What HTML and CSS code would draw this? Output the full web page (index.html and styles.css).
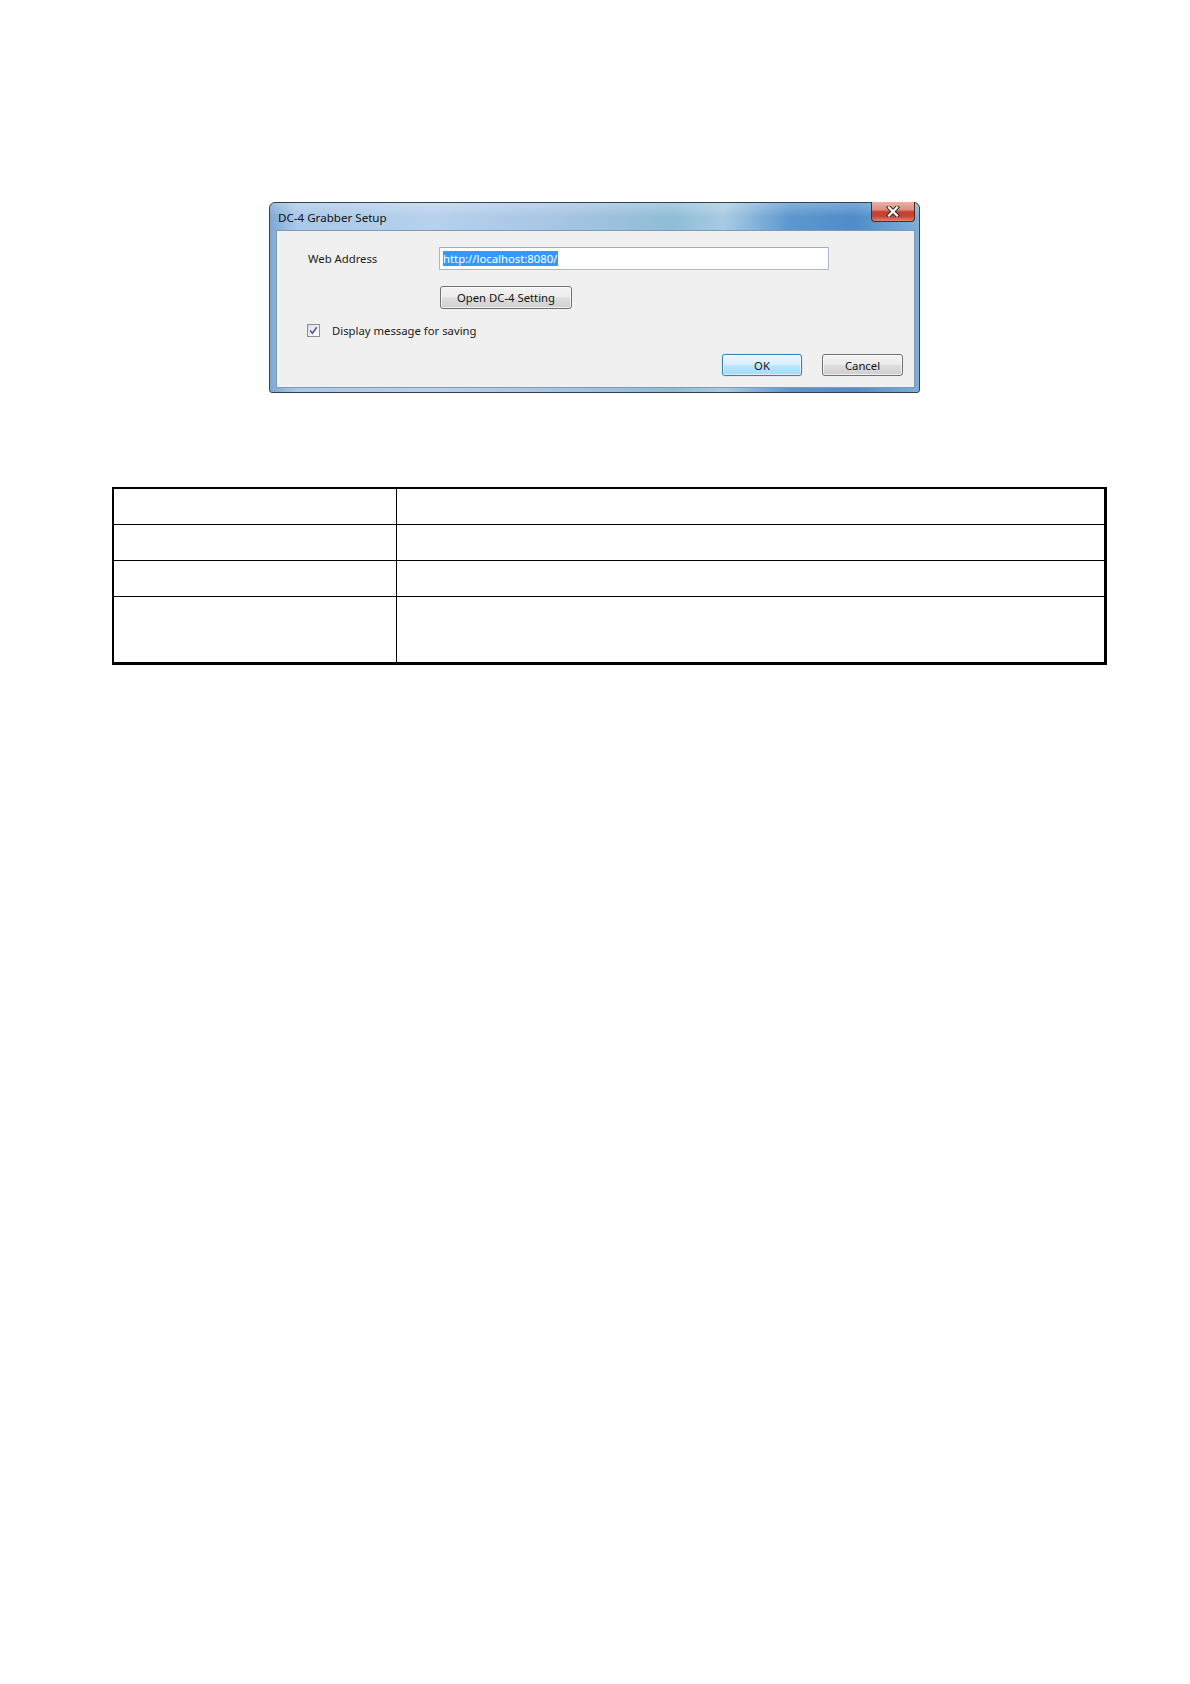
FILE: index.html
```html
<!DOCTYPE html>
<html lang="en">
<head>
<meta charset="utf-8">
<title>DC-4 Grabber Setup</title>
<link rel="stylesheet" href="styles.css">
</head>
<body>
<div class="page">
  <div class="dialog">
    <div class="titlebar">
      <span class="title">DC-4 Grabber Setup</span>
      <div class="close">
        <svg width="14" height="11" viewBox="0 0 14 11">
          <path d="M3 1.5 L11 9.5 M11 1.5 L3 9.5" stroke="#3a2a2a" stroke-width="4.2" stroke-linecap="square" fill="none"/>
          <path d="M3 1.5 L11 9.5 M11 1.5 L3 9.5" stroke="#ffffff" stroke-width="2.2" stroke-linecap="square" fill="none"/>
        </svg>
      </div>
    </div>
    <div class="client">
      <div class="row row-address">
        <span class="label">Web Address</span>
        <div class="input"><span class="sel">http://localhost:8080/</span></div>
      </div>
      <div class="row row-open">
        <div class="btn btn-open">Open DC-4 Setting</div>
      </div>
      <div class="row row-check">
        <span class="checkbox">
          <svg width="11" height="11" viewBox="0 0 11 11">
            <path d="M2.2 5.6 L4.4 8.3 L8.8 2.2" stroke="#4b5a9a" stroke-width="1.6" fill="none"/>
          </svg>
        </span>
        <span class="check-label">Display message for saving</span>
      </div>
      <div class="row row-actions">
        <div class="btn btn-ok">OK</div>
        <div class="btn btn-cancel">Cancel</div>
      </div>
    </div>
  </div>

  <div class="grid">
    <div class="cell c1"></div><div class="cell c2"></div>
    <div class="cell c1"></div><div class="cell c2"></div>
    <div class="cell c1"></div><div class="cell c2"></div>
    <div class="cell c1 last tall"></div><div class="cell c2 last tall"></div>
  </div>
</div>
</body>
</html>
```

FILE: styles.css
```css
html, body {
  margin: 0;
  padding: 0;
  background: #ffffff;
}

.page {
  padding-top: 202px;
  font-family: "Noto Sans", "Open Sans", "DejaVu Sans", sans-serif;
  font-size: 11.3px;
  color: #1b1b1b;
}

/* ---------- dialog ---------- */
.dialog {
  width: 651px;
  height: 191px;
  margin-left: 269px;
  box-sizing: border-box;
  border: 1px solid #34414f;
  border-radius: 6px 6px 3px 3px;
  padding: 0 4px 4px 6px;
  background:
    linear-gradient(180deg, rgba(255,255,255,0.25) 0, rgba(255,255,255,0) 14px),
    linear-gradient(90deg, #7fa8d2 0, #a9c8e8 4%, #b7d1ec 25%, #a6c4e4 45%, #8fbdd6 62%, #a8cbe3 70%, #5d97cf 80%, #4f8cc8 90%, #7eaedb 100%);
}

.titlebar {
  height: 27px;
  display: flex;
  align-items: center;
  justify-content: space-between;
}

.title {
  padding-left: 2px;
  padding-top: 1px;
  font-size: 11.6px;
  color: #111;
}

.close {
  align-self: flex-start;
  margin-top: -1px;
  width: 44px;
  height: 20px;
  box-sizing: border-box;
  border: 1px solid #5b2520;
  border-top: none;
  border-radius: 0 0 4px 4px;
  background: linear-gradient(180deg, #eab0a3 0, #de9080 40%, #c8412f 52%, #c34533 75%, #de8670 100%);
  display: flex;
  align-items: center;
  justify-content: center;
}

.client {
  height: 158px;
  box-sizing: border-box;
  border: 1px solid #7f98b4;
  background: #f0f0f0;
  padding: 16px 11px 0 31px;
  display: flex;
  flex-direction: column;
}

.row {
  display: flex;
  align-items: center;
}

.label {
  width: 131px;
  flex: none;
}

.input {
  width: 390px;
  height: 23px;
  box-sizing: border-box;
  border: 1px solid #abb9cc;
  border-top-color: #9fafc3;
  background: #ffffff;
  padding-left: 3px;
  display: flex;
  align-items: center;
}

.sel {
  background: #3399ff;
  color: #ffffff;
  line-height: 15px;
  padding-right: 1px;
}

.row-open {
  margin-top: 16px;
  padding-left: 132px;
}

.btn {
  box-sizing: border-box;
  height: 22px;
  border: 1px solid #707070;
  border-radius: 3px;
  background: linear-gradient(180deg, #f3f3f3 0, #ebebeb 48%, #dddddd 52%, #cfcfcf 100%);
  box-shadow: inset 0 0 0 1px rgba(255,255,255,0.7);
  display: flex;
  align-items: center;
  justify-content: center;
  color: #151515;
}

.btn-open {
  width: 132px;
  height: 23px;
}

.row-check {
  margin-top: 15px;
  height: 13px;
}

.checkbox {
  width: 13px;
  height: 13px;
  box-sizing: border-box;
  margin-left: -1px;
  border: 1px solid #8e8f8f;
  background: linear-gradient(135deg, #dcdcdc 0, #f4f4f4 60%, #ffffff 100%);
  display: flex;
  align-items: center;
  justify-content: center;
}

.check-label {
  margin-left: 12px;
}

.row-actions {
  margin-top: 17px;
  justify-content: flex-end;
  gap: 20px;
}

.btn-ok {
  width: 80px;
  border-color: #3c7fb1;
  background: linear-gradient(180deg, #eaf6fd 0, #d9f0fc 48%, #bee6fd 52%, #a7d9f5 100%);
  box-shadow: inset 0 0 0 1px rgba(255,255,255,0.6), 0 0 1px #48a6e0;
}

.btn-cancel {
  width: 81px;
}

/* ---------- table ---------- */
.grid {
  margin-top: 94px;
  margin-left: 112px;
  width: 995px;
  box-sizing: border-box;
  border-top: 2px solid #000;
  border-left: 2px solid #000;
  border-right: 3px solid #000;
  border-bottom: 3px solid #000;
  display: grid;
  grid-template-columns: 283px 1fr;
}

.cell {
  height: 36px;
  box-sizing: border-box;
  border-bottom: 1px solid #000;
}

.c1 {
  border-right: 1px solid #000;
}

.cell.last {
  border-bottom: none;
}

.cell.tall {
  height: 65px;
}
```
